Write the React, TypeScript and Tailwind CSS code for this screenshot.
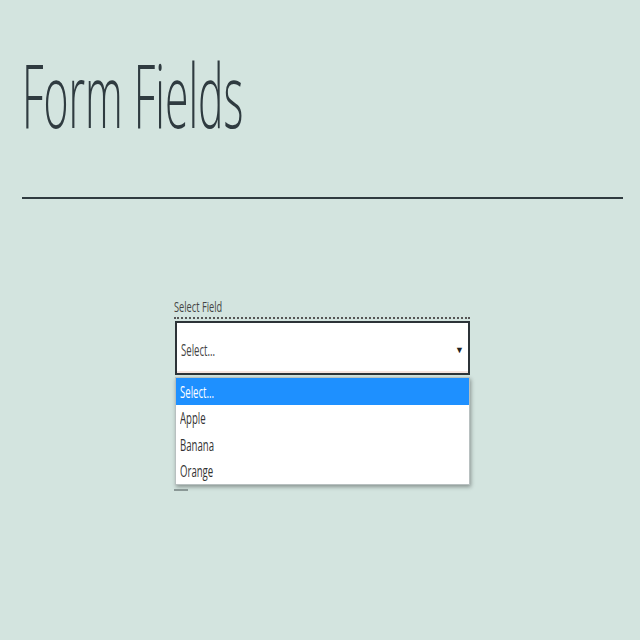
export default function App() {
  const options = ['Select...', 'Apple', 'Banana', 'Orange'];
  return (
    <div className="min-h-[640px] w-[640px] bg-[#d3e4df] px-[22px] font-['Open_Sans',sans-serif] text-[#2f3b40]">
      {/* Heading */}
      <h1 className="pt-[50px] text-[88px] font-light leading-[88px] whitespace-nowrap">
        <span className="inline-block origin-left scale-x-[0.485]">Form Fields</span>
      </h1>
      <div className="mt-[59px] h-[2px] w-[601px] bg-[#2f3b40]" />

      {/* Select field */}
      <div className="ml-[152px] mt-[100px] w-[296px]">
        <div className="border-b-2 border-dotted border-[#555] pb-[2px] text-[14px] leading-[16px] text-[#444] whitespace-nowrap">
          <span className="inline-block origin-left scale-x-[0.66]">Select Field</span>
        </div>
        <div className="relative mt-[2px] ml-[1px]">
          <div className="flex h-[54px] items-center justify-between border-2 border-[#2c3338] bg-white pl-[4px] pr-[4px] pt-[3px] shadow-[inset_0_-2px_0_#f6e4e0]">
            <span className="inline-block origin-left scale-x-[0.6] text-[16px] text-[#444] whitespace-nowrap">Select...</span>
            <span className="text-[9px] text-[#222]">▼</span>
          </div>
          <ul className="mt-[2px] border border-[#b8c0c0] bg-white shadow-[1px_2px_4px_rgba(0,0,0,0.35)]">
            {options.map((o, i) => (
              <li
                key={o}
                className={`flex h-[26.5px] items-center pl-[4px] pt-[1px] text-[16px] whitespace-nowrap ${
                  i === 0 ? 'bg-[#1e90ff] text-white' : 'text-[#333]'
                }`}
              >
                <span className="inline-block origin-left scale-x-[0.6]">{o}</span>
              </li>
            ))}
          </ul>
          <div className="mt-[4px] -ml-[1px] h-[2px] w-[14px] bg-[#8a9896]" />
        </div>
      </div>
    </div>
  );
}
